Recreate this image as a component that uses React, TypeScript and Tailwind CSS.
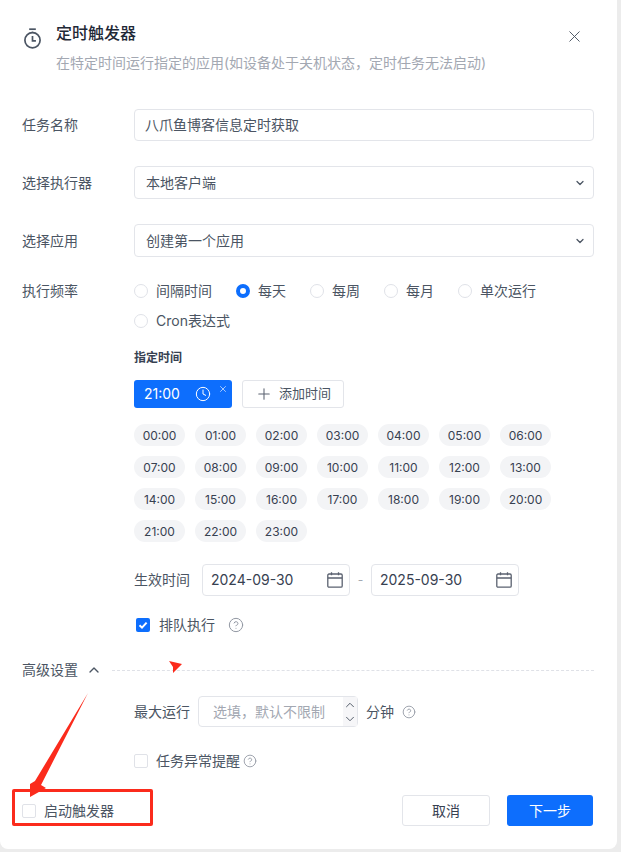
import { ChevronDown, ChevronUp, CircleHelp, Clock, Plus, X } from "lucide-react";

const font = "font-['Inter','Noto_Sans_CJK_SC',sans-serif]";

const hours = Array.from({ length: 24 }, (_, i) => `${String(i).padStart(2, "0")}:00`);
const frequencies = ["间隔时间", "每天", "每周", "每月", "单次运行", "Cron表达式"];

function Radio({ label, checked }: { label: string; checked?: boolean }) {
  return (
    <label className="flex h-5 items-center gap-2 text-sm text-[#4b5563]">
      {checked ? (
        <span className="h-[14px] w-[14px] rounded-full border-[4px] border-[#0d6efd] bg-white" />
      ) : (
        <span className="h-[14px] w-[14px] rounded-full border border-[#e0e2e8] bg-white" />
      )}
      {label}
    </label>
  );
}

function Box({ checked }: { checked?: boolean }) {
  if (checked) {
    return (
      <span className="flex h-[14px] w-[14px] items-center justify-center rounded-[2px] bg-[#0d6efd]">
        <svg viewBox="0 0 14 14" className="h-[14px] w-[14px]" fill="none" stroke="white" strokeWidth="2">
          <path d="M3.5 7.2 6 9.6l4.6-5" />
        </svg>
      </span>
    );
  }
  return <span className="h-[14px] w-[14px] rounded-[2px] border border-[#e0e2e8] bg-white" />;
}

function CalendarIcon() {
  return (
    <svg viewBox="0 0 16 16" className="h-4 w-4 text-[#5b6270]" fill="none" stroke="currentColor" strokeWidth="1.3">
      <rect x="0.8" y="2" width="14.4" height="13.2" rx="1.2" />
      <path d="M0.8 6h14.4M4.5 0.3v3M11.5 0.3v3" />
    </svg>
  );
}

function DateInput({ value }: { value: string }) {
  return (
    <div className="flex h-8 w-[148px] items-center justify-between rounded-[4px] border border-[#e3e5ea] pl-2 pr-[6px] text-sm text-[#374151]">
      {value}
      <CalendarIcon />
    </div>
  );
}

function Select({ value }: { value: string }) {
  return (
    <div className="flex h-[33px] items-center justify-between rounded-[4px] border border-[#e3e5ea] pl-[11px] pr-[7px] text-sm text-[#4b5563]">
      {value}
      <ChevronDown size={12} strokeWidth={2.5} className="text-[#4b5563]" />
    </div>
  );
}

function Row({ label, children }: { label: string; children: React.ReactNode }) {
  return (
    <div className="flex items-center">
      <div className="w-[112px] shrink-0 text-sm text-[#4b5563]">{label}</div>
      <div className="min-w-0 flex-1">{children}</div>
    </div>
  );
}

export default function App() {
  return (
    <div className={`relative h-[852px] w-[621px] overflow-hidden bg-[#ececec] ${font}`}>
      <div className="h-[849px] w-[617px] rounded-b-lg bg-white">
        <div className="flex pl-[23px] pr-[33px] pt-[22px]">
          <svg viewBox="0 0 20 22" className="mt-[6px] h-[21px] w-[19px] shrink-0 text-[#4b5563]" fill="none" stroke="currentColor" strokeWidth="1.8">
            <path d="M6.5 1.2h7" />
            <path d="M10 3.8v1" />
            <circle cx="10" cy="12.8" r="8" />
            <path d="M10 8.4v5h3.6" />
          </svg>
          <div className="ml-[14px] flex-1">
            <div className="flex h-[22px] items-center justify-between">
              <span className="text-base font-medium text-[#1f2937]">定时触发器</span>
              <X size={19} strokeWidth={1.2} className="mt-[6px] text-[#4b5563]" />
            </div>
            <p className="mt-[9px] h-5 text-sm leading-5 text-[#a3a8b2]">
              {"在特定时间运行指定的应用(如设备处于关机状态\uFF0C定时任务无法启动)"}
            </p>
          </div>
        </div>

        <div className="mt-9 pl-[22px] pr-[23px]">
          <Row label="任务名称">
            <div className="flex h-8 items-center rounded-[4px] border border-[#e3e5ea] pl-[10px] text-sm text-[#4b5563]">
              八爪鱼博客信息定时获取
            </div>
          </Row>
          <div className="mt-[25px]">
            <Row label="选择执行器">
              <Select value="本地客户端" />
            </Row>
          </div>
          <div className="mt-[25px]">
            <Row label="选择应用">
              <Select value="创建第一个应用" />
            </Row>
          </div>

          <div className="mt-6 flex">
            <div className="flex h-5 w-[112px] shrink-0 items-center text-sm text-[#4b5563]">执行频率</div>
            <div className="flex-1">
              <div className="flex flex-wrap gap-x-6 gap-y-[10px]">
                {frequencies.map((f) => (
                  <Radio key={f} label={f} checked={f === "每天"} />
                ))}
              </div>

              <div className="mt-[18px] h-[18px] text-xs font-semibold leading-[18px] text-[#374151]">指定时间</div>

              <div className="mt-[13px] flex gap-[10px]">
                <div className="relative flex h-7 w-[98px] items-center rounded-[3px] bg-[#0d6efd] pl-[10px] text-sm text-white">
                  21:00
                  <Clock size={16} strokeWidth={1.5} className="ml-[15px]" />
                  <X size={10} strokeWidth={1.5} className="absolute right-[4px] top-[4px]" />
                </div>
                <div className="flex h-7 w-[102px] items-center gap-[6px] rounded-[3px] border border-[#e3e5ea] pl-[12px] text-[13px] text-[#4b5563]">
                  <Plus size={18} strokeWidth={1.4} className="text-[#5b6270]" />
                  添加时间
                </div>
              </div>

              <div className="mt-4 grid w-[417px] grid-cols-7 gap-x-[10px] gap-y-[10px]">
                {hours.map((h) => (
                  <div key={h} className="flex h-[22px] items-center justify-center rounded-full bg-[#f3f4f6] pt-[2px] text-xs text-[#374151]">
                    {h}
                  </div>
                ))}
              </div>

              <div className="mt-[22px] flex h-8 items-center">
                <span className="w-[68px] text-sm text-[#4b5563]">生效时间</span>
                <DateInput value="2024-09-30" />
                <span className="w-[21px] text-center text-xs text-[#a3a8b2]">-</span>
                <DateInput value="2025-09-30" />
              </div>

              <div className="mt-[19px] flex h-5 items-center pl-[2px] text-sm text-[#4b5563]">
                <Box checked />
                <span className="ml-[9px]">排队执行</span>
                <CircleHelp size={16} strokeWidth={1.5} className="ml-[13px] text-[#9298a3]" />
              </div>
            </div>
          </div>

          <div className="mt-[25px] flex h-5 items-center">
            <span className="text-sm text-[#4b5563]">高级设置</span>
            <ChevronUp size={16} strokeWidth={2} className="ml-[8px] text-[#4b5563]" />
            <div className="ml-[10px] flex-1 border-t border-dashed border-[#dfe1e7]" />
          </div>

          <div className="mt-4 flex h-[31px] items-center pl-[112px] text-sm text-[#4b5563]">
            <span>最大运行</span>
            <div className="ml-2 flex h-[31px] w-[160px] items-center justify-between rounded-[4px] border border-[#e3e5ea] pl-[14px] text-sm text-[#a3a8b2]">
              {"选填\uFF0C默认不限制"}
              <div className="flex h-full w-[14px] flex-col items-center justify-center bg-[#f6f6f8] text-[#4b5563]">
                <ChevronUp size={14} strokeWidth={1.6} />
                <ChevronDown size={14} strokeWidth={1.6} />
              </div>
            </div>
            <span className="ml-2">分钟</span>
            <CircleHelp size={14} strokeWidth={1.5} className="ml-[8px] text-[#9298a3]" />
          </div>

          <div className="mt-6 flex h-5 items-center pl-[112px] text-sm text-[#4b5563]">
            <Box />
            <span className="ml-2">任务异常提醒</span>
            <CircleHelp size={14} strokeWidth={1.5} className="ml-[3px] text-[#9298a3]" />
          </div>

          <div className="mt-6 flex h-[31px] items-center justify-between pr-[1px]">
            <div className="flex items-center text-sm text-[#4b5563]">
              <Box />
              <span className="ml-2">启动触发器</span>
            </div>
            <div className="flex gap-[17px] text-sm">
              <button className="h-[31px] w-[88px] rounded-[3px] border border-[#e3e5ea] text-[#374151]">取消</button>
              <button className="h-[31px] w-[86px] rounded-[3px] bg-[#0d6efd] text-white">下一步</button>
            </div>
          </div>
        </div>
      </div>

      {/* annotations drawn over the screenshot */}
      <div className="absolute left-[12px] top-[789px] h-[37px] w-[141px] rounded-[2px] border-[3px] border-[#fb2b1c]" />
      <svg viewBox="0 0 621 852" className="pointer-events-none absolute left-0 top-0 h-[852px] w-[621px]">
        <path d="M88 693 L41 785 L46 788 L30 797 L30 784 L35 781 Z" fill="#fb2b1c" />
        <path d="M169 661 L182 664 L173 673 L173 667 Z" fill="#fb2b1c" />
      </svg>
    </div>
  );
}
